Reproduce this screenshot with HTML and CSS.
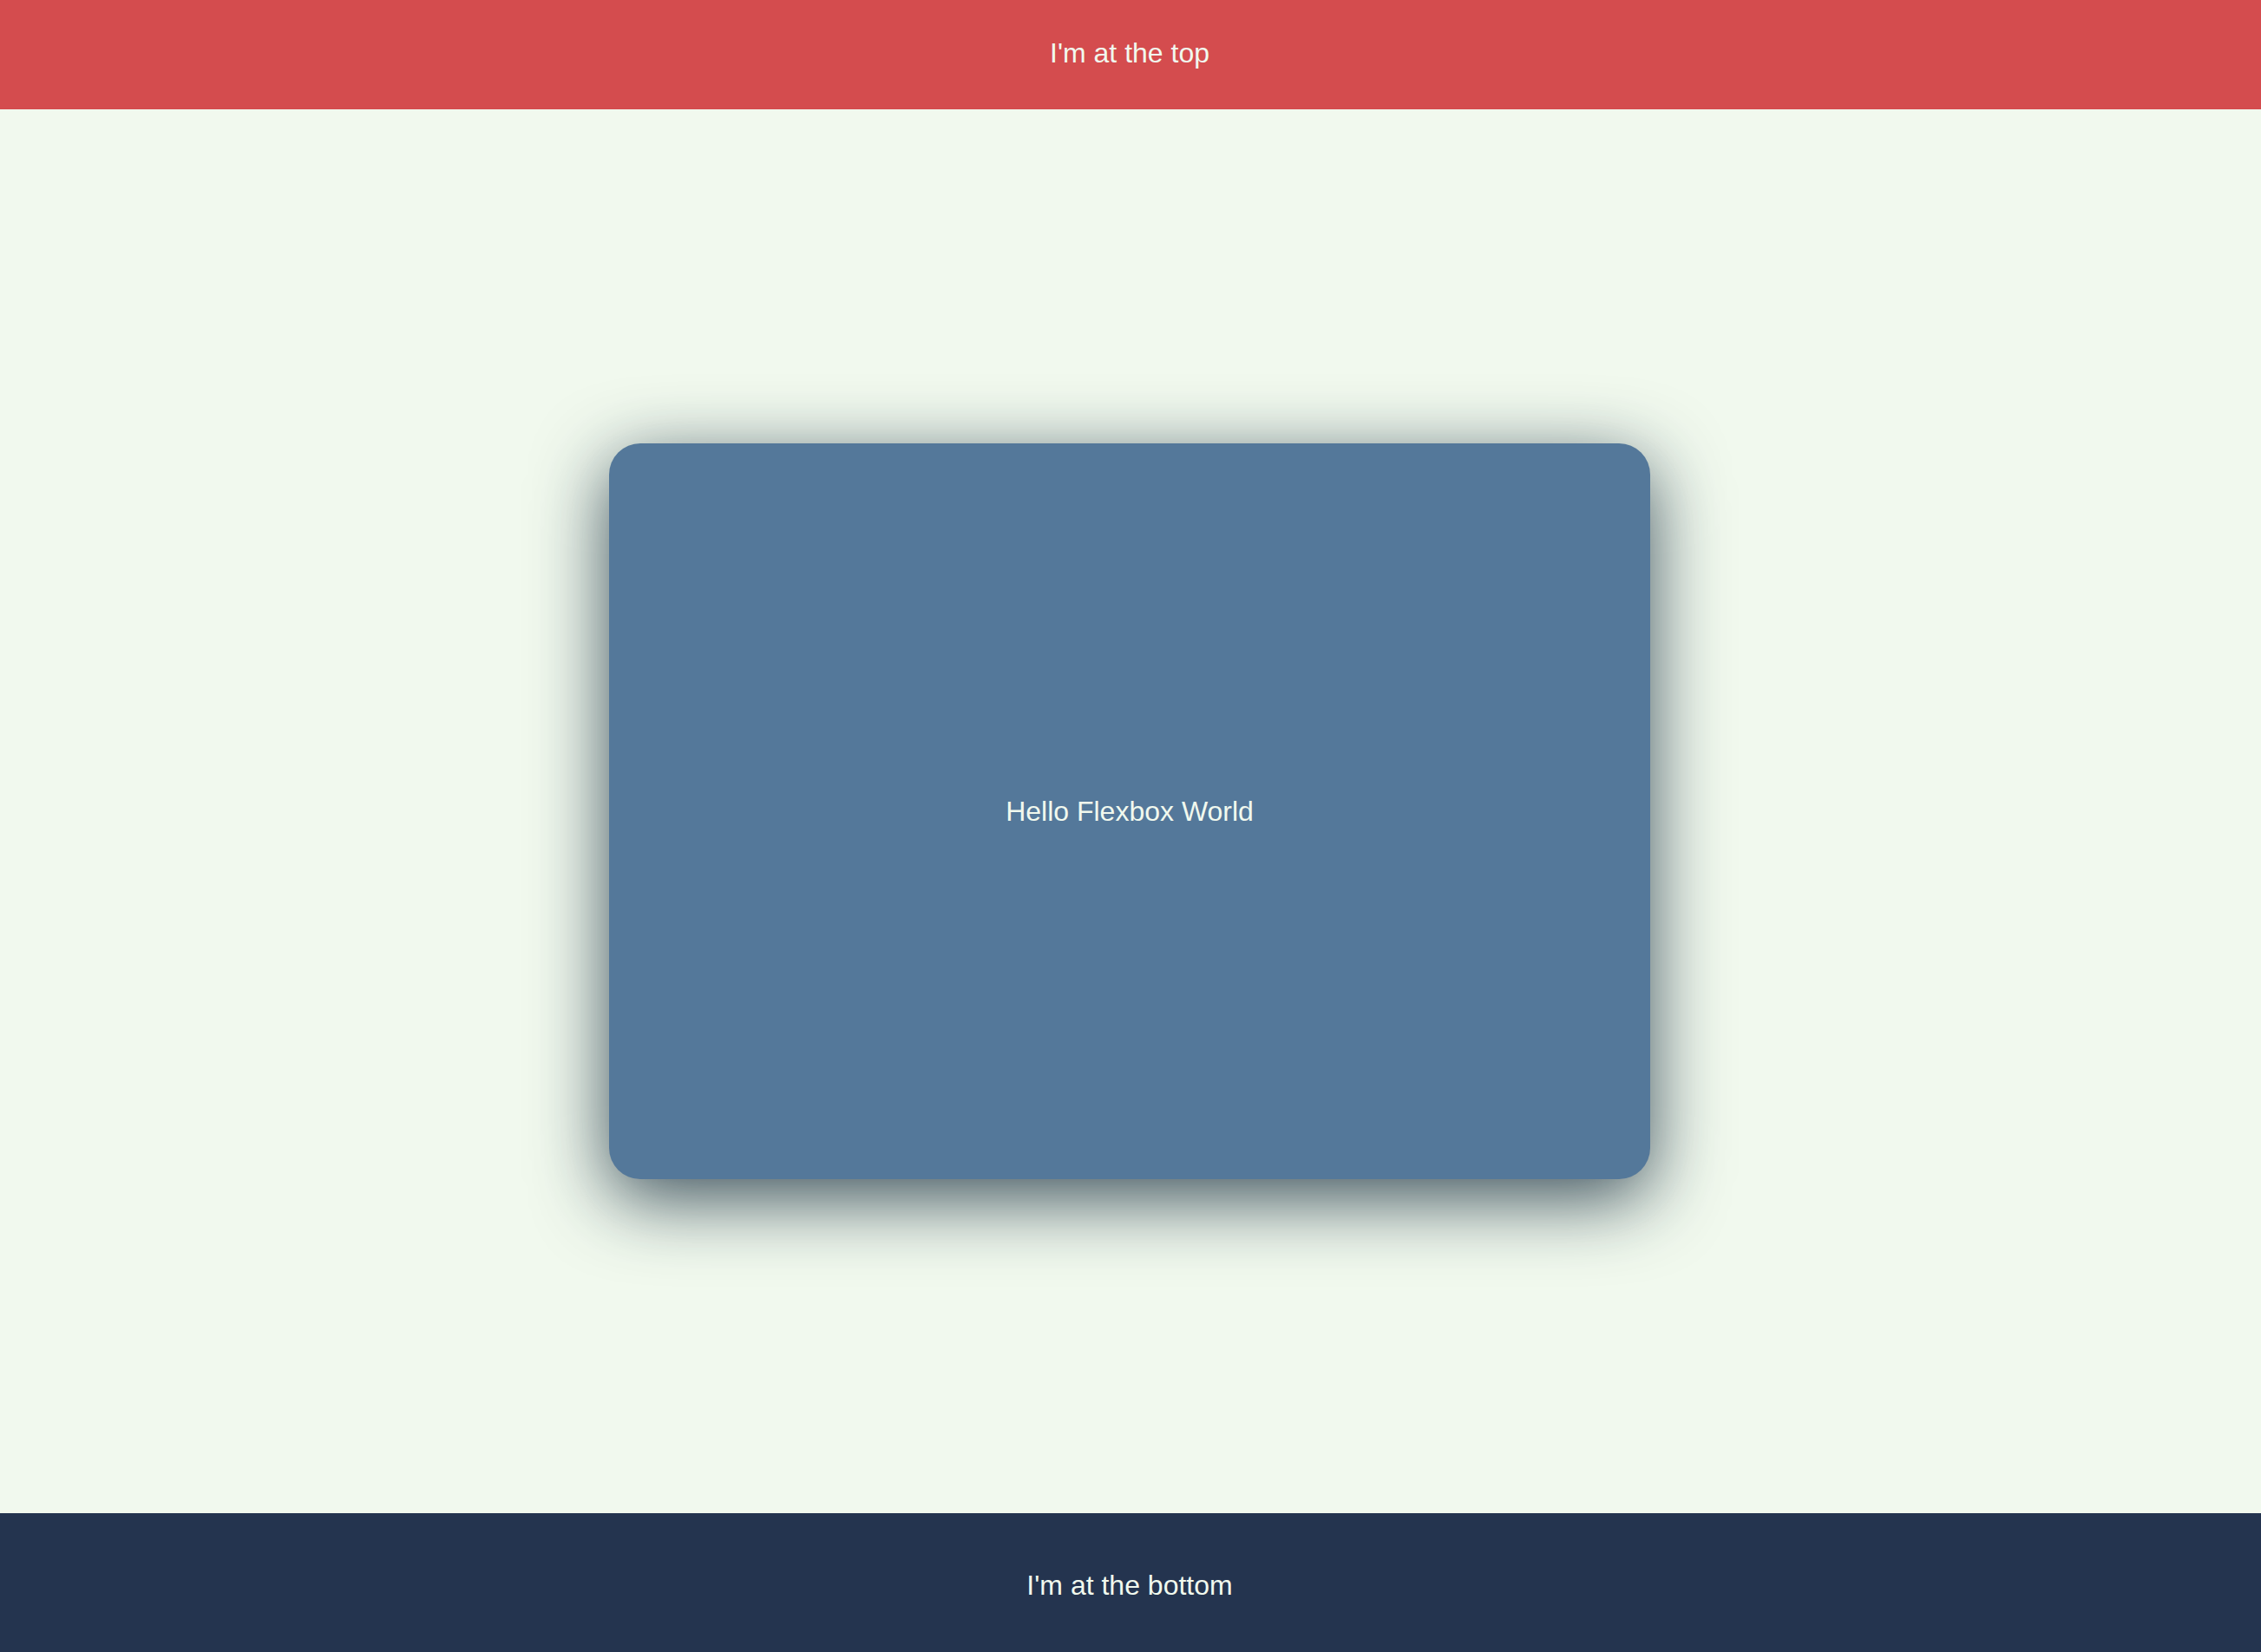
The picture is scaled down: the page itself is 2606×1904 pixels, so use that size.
FILE: index.html
```html
<!DOCTYPE html>
<html lang="en">
<head>
<meta charset="utf-8">
<title>Flexbox</title>
<link rel="stylesheet" href="styles.css">
</head>
<body>
<div class="page">
  <header class="top">I'm at the top</header>
  <main class="middle">
    <div class="card">Hello Flexbox World</div>
  </main>
  <footer class="bottom">I'm at the bottom</footer>
</div>
</body>
</html>
```

FILE: styles.css
```css
html, body {
  margin: 0;
  padding: 0;
  height: 100%;
}
body {
  background: #f1f9ee;
  font-family: "Liberation Sans", Arial, sans-serif;
  font-size: 32px;
  color: #f1f9ee;
}
.page {
  display: flex;
  flex-direction: column;
  height: 100vh;
}
.top {
  box-sizing: border-box;
  height: 126px;
  flex: 0 0 126px;
  padding: 0 2px 3px 0;
  background: #d44c4e;
  display: flex;
  align-items: center;
  justify-content: center;
}
.middle {
  flex: 1 1 auto;
  padding-right: 2px;
  display: flex;
  align-items: center;
  justify-content: center;
}
.card {
  width: 1200px;
  height: 848px;
  background: #54789a;
  border-radius: 36px;
  box-shadow: 0 22px 85px rgba(15, 38, 55, 0.8);
  display: flex;
  align-items: center;
  justify-content: center;
}
.bottom {
  box-sizing: border-box;
  height: 160px;
  flex: 0 0 160px;
  padding: 7px 2px 0 0;
  background: #24344f;
  display: flex;
  align-items: center;
  justify-content: center;
}
```
